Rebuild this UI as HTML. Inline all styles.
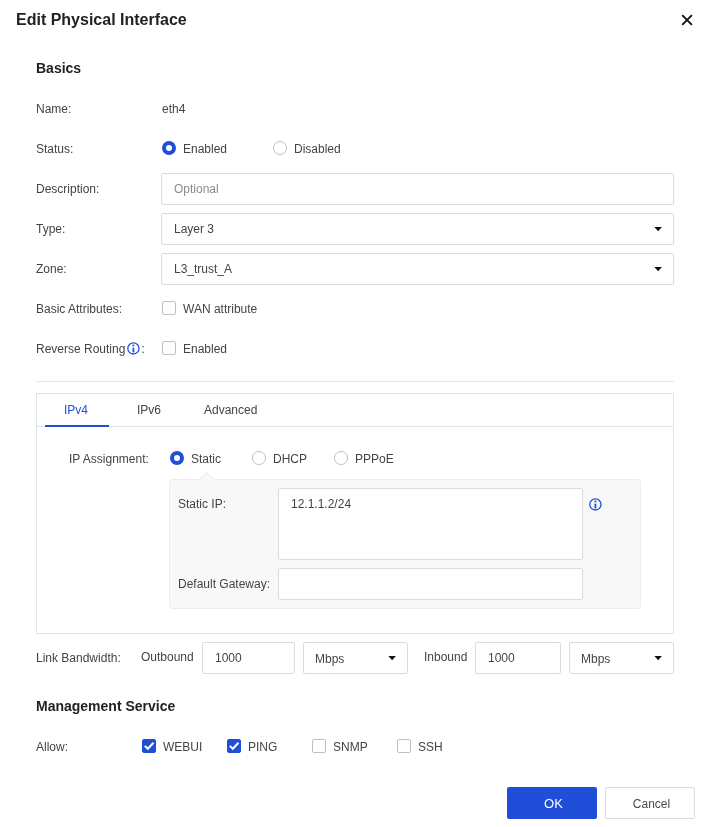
<!DOCTYPE html>
<html><head><meta charset="utf-8"><title>Edit Physical Interface</title>
<style>
*{box-sizing:border-box;margin:0;padding:0}
html,body{width:703px;height:827px;background:#fff;overflow:hidden}
body{font-family:"Liberation Sans",Arial,sans-serif;font-size:12px;color:#444;position:relative}
.a{position:absolute;white-space:nowrap;line-height:16px}
.t{font-weight:bold;font-size:16px;color:#222;line-height:20px}
.h{font-weight:bold;font-size:14px;color:#222;line-height:18px}
.in{position:absolute;border:1px solid #dcdcdc;border-radius:2px;background:#fff;height:32px;line-height:30px;padding-left:12px;color:#444;white-space:nowrap}
.ph{color:#8c8c8c}
.caret{position:absolute;right:11.4px;top:13px;display:block}
.rad{position:absolute;width:14px;height:14px;border-radius:50%;border:1px solid #bfbfbf;background:#fff}
.rad.on{border:4px solid #204ed9}
.cb{position:absolute;width:14px;height:14px;border:1px solid #bfbfbf;border-radius:2px;background:#fff}
.cb.on{border-color:#204ed9;background:#204ed9}
.cb.on svg{position:absolute;left:-1px;top:-1px}
.btn{position:absolute;height:32px;width:90px;border-radius:2px;text-align:center;line-height:32px;font-size:12px}
#w{position:absolute;left:0;top:0;width:703px;height:827px;will-change:transform}
</style></head><body><div id="w">
<div class="a t" style="left:16px;top:10px">Edit Physical Interface</div>
<svg class="a" style="left:681px;top:13.7px" width="12" height="12" viewBox="0 0 12 12"><path d="M1.2 1.2L10.9 10.9M10.9 1.2L1.2 10.9" stroke="#111" stroke-width="1.9" fill="none"/></svg>

<div class="a h" style="left:36px;top:59px">Basics</div>

<div class="a" style="left:36px;top:101px">Name:</div>
<div class="a" style="left:162px;top:101px">eth4</div>

<div class="a" style="left:36px;top:141px">Status:</div>
<div class="rad on" style="left:162px;top:141px"></div>
<div class="a" style="left:183px;top:141px">Enabled</div>
<div class="rad" style="left:273px;top:141px"></div>
<div class="a" style="left:294px;top:141px">Disabled</div>

<div class="a" style="left:36px;top:181px">Description:</div>
<div class="in ph" style="left:161px;top:173px;width:513px">Optional</div>

<div class="a" style="left:36px;top:221px">Type:</div>
<div class="in" style="left:161px;top:213px;width:513px">Layer 3<svg class="caret" width="8" height="5" viewBox="0 0 8 5"><path d="M0.4 0L7.9 0L4.15 4.3Z" fill="#111"/></svg></div>

<div class="a" style="left:36px;top:261px">Zone:</div>
<div class="in" style="left:161px;top:253px;width:513px">L3_trust_A<svg class="caret" width="8" height="5" viewBox="0 0 8 5"><path d="M0.4 0L7.9 0L4.15 4.3Z" fill="#111"/></svg></div>

<div class="a" style="left:36px;top:301px">Basic Attributes:</div>
<div class="cb" style="left:162px;top:301px"></div>
<div class="a" style="left:183px;top:301px">WAN attribute</div>

<div class="a" style="left:36px;top:341px">Reverse Routing</div>
<svg class="a" style="left:127px;top:341.5px" width="13" height="13" viewBox="0 0 13 13"><circle cx="6.4" cy="6.4" r="5.6" fill="none" stroke="#204ed9" stroke-width="1.3"/><rect x="5.5" y="5.7" width="1.8" height="4.7" fill="#204ed9"/><rect x="5.5" y="2.6" width="1.8" height="1.7" fill="#204ed9"/></svg>
<div class="a" style="left:141.5px;top:341px">:</div>
<div class="cb" style="left:162px;top:341px"></div>
<div class="a" style="left:183px;top:341px">Enabled</div>

<div class="a" style="left:36px;top:381px;width:638px;height:1px;background:#e4e7ef"></div>

<div class="a" style="left:36px;top:393px;width:638px;height:241px;border:1px solid #dfe3ee"></div>
<div class="a" style="left:37px;top:426px;width:636px;height:1px;background:#dfe3ee"></div>
<div class="a" style="left:45px;top:425px;width:64px;height:2px;background:#204ed9"></div>
<div class="a" style="left:64px;top:402px;color:#204ed9">IPv4</div>
<div class="a" style="left:137px;top:402px">IPv6</div>
<div class="a" style="left:204px;top:402px">Advanced</div>

<div class="a" style="left:69px;top:451px">IP Assignment:</div>
<div class="rad on" style="left:170px;top:451px"></div>
<div class="a" style="left:191px;top:451px">Static</div>
<div class="rad" style="left:252px;top:451px"></div>
<div class="a" style="left:273px;top:451px">DHCP</div>
<div class="rad" style="left:334px;top:451px"></div>
<div class="a" style="left:355px;top:451px">PPPoE</div>

<div class="a" style="left:169px;top:479px;width:472px;height:130px;background:#f8f8f8;border:1px solid #ededed;border-radius:3px"></div>
<svg class="a" style="left:199px;top:471px" width="15" height="9" viewBox="0 0 15 9"><path d="M0 9L0.3 8.5L7.3 1.7L14.3 8.5L14.6 9Z" fill="#f8f8f8"/><path d="M0.3 8.5L7.3 1.7L14.3 8.5" fill="none" stroke="#e9e9e9" stroke-width="1"/></svg>
<div class="a" style="left:178px;top:496px">Static IP:</div>
<div class="in" style="left:278px;top:488px;width:305px;height:72px;line-height:30px;padding-left:12px">12.1.1.2/24</div>
<svg class="a" style="left:589px;top:497.6px" width="13" height="13" viewBox="0 0 13 13"><circle cx="6.4" cy="6.4" r="5.6" fill="none" stroke="#204ed9" stroke-width="1.3"/><rect x="5.5" y="5.7" width="1.8" height="4.7" fill="#204ed9"/><rect x="5.5" y="2.6" width="1.8" height="1.7" fill="#204ed9"/></svg>
<div class="a" style="left:178px;top:576px">Default Gateway:</div>
<div class="in" style="left:278px;top:568px;width:305px"></div>

<div class="a" style="left:36px;top:650px">Link Bandwidth:</div>
<div class="a" style="left:141px;top:649px">Outbound</div>
<div class="in" style="left:202px;top:642px;width:93px">1000</div>
<div class="in" style="left:303px;top:642px;width:105px;padding-left:11px;line-height:32px">Mbps<svg class="caret" width="8" height="5" viewBox="0 0 8 5"><path d="M0.4 0L7.9 0L4.15 4.3Z" fill="#111"/></svg></div>
<div class="a" style="left:424px;top:649px">Inbound</div>
<div class="in" style="left:475px;top:642px;width:86px">1000</div>
<div class="in" style="left:569px;top:642px;width:105px;padding-left:11px;line-height:32px">Mbps<svg class="caret" width="8" height="5" viewBox="0 0 8 5"><path d="M0.4 0L7.9 0L4.15 4.3Z" fill="#111"/></svg></div>

<div class="a h" style="left:36px;top:697px">Management Service</div>

<div class="a" style="left:36px;top:739px">Allow:</div>
<div class="cb on" style="left:142px;top:739px"><svg width="14" height="14" viewBox="0 0 14 14"><path d="M2.8 6.9L5.8 9.8L11.5 3.8" stroke="#fff" stroke-width="2" fill="none"/></svg></div>
<div class="a" style="left:163px;top:739px">WEBUI</div>
<div class="cb on" style="left:227px;top:739px"><svg width="14" height="14" viewBox="0 0 14 14"><path d="M2.8 6.9L5.8 9.8L11.5 3.8" stroke="#fff" stroke-width="2" fill="none"/></svg></div>
<div class="a" style="left:248px;top:739px">PING</div>
<div class="cb" style="left:312px;top:739px"></div>
<div class="a" style="left:333px;top:739px">SNMP</div>
<div class="cb" style="left:397px;top:739px"></div>
<div class="a" style="left:418px;top:739px">SSH</div>

<div class="btn" style="left:507px;top:787px;background:#204ed9;color:#fff;font-size:13px;line-height:34px;padding-left:3px">OK</div>
<div class="btn" style="left:605px;top:787px;background:#fff;border:1px solid #dcdcdc;color:#4a4a4a;line-height:32px;padding-left:3px">Cancel</div>
</div></body></html>
